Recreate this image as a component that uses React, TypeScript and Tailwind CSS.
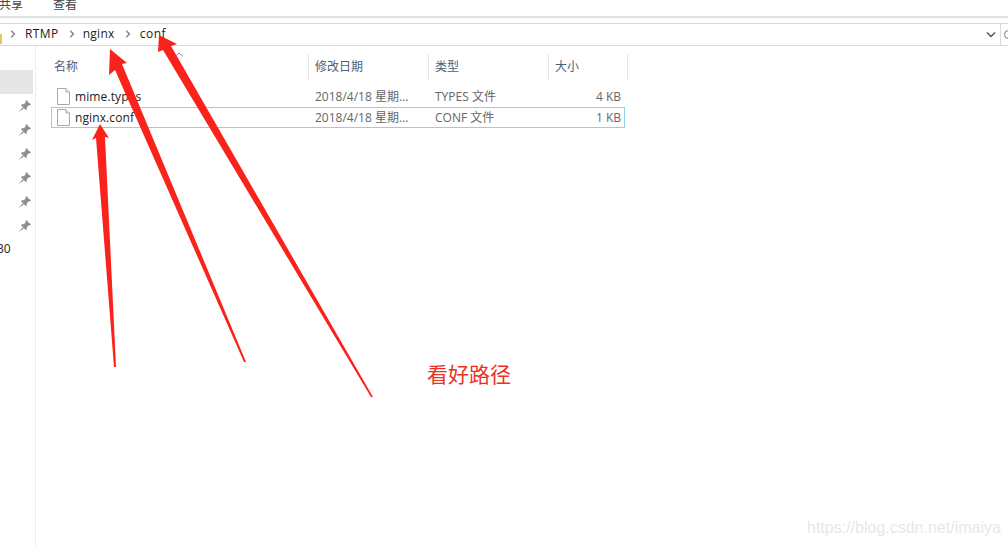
const Pin = () => (
  <svg width="12" height="12" viewBox="0 0 12 12" className="text-[#8f8f8f]">
    <path d="M7.2 0 L12 4.8 L10.8 5.6 L9.8 5.2 L7.8 7.2 L7.8 9.2 L6.8 10 L2 5.2 L2.8 4.2 L4.8 4.2 L6.8 2.2 L6.4 1.2 Z M3.6 7.2 L0 12 L4.8 8.4 Z" fill="currentColor" />
  </svg>
);

const FileIcon = () => (
  <svg width="13" height="17" viewBox="0 0 13 17" className="shrink-0">
    <path d="M0.5 0.5 H9 L12.5 4 V16.5 H0.5 Z" fill="#fff" stroke="#a8a8a8" />
    <path d="M9 0.5 V4 H12.5" fill="#f4f4f4" stroke="#a8a8a8" />
  </svg>
);

const Chevron = () => (
  <svg width="6" height="8" viewBox="0 0 6 8" className="shrink-0">
    <path d="M1.2 0.8 L4.4 4 L1.2 7.2" fill="none" stroke="#858585" strokeWidth="1.5" />
  </svg>
);

const files = [
  { name: "mime.types", date: "2018/4/18 星期...", type: "TYPES 文件", size: "4 KB" },
  { name: "nginx.conf", date: "2018/4/18 星期...", type: "CONF 文件", size: "1 KB" },
];

const font = "font-['Open_Sans','Noto_Sans_CJK_SC',sans-serif]";

const App = () => {
  return (
    <div className={`relative w-[1008px] h-[546px] overflow-hidden bg-white text-[12px] ${font}`}>
      {/* ribbon tabs */}
      <div className="h-[18px] border-b-2 border-[#e3e3e3] flex text-[#444] leading-[9px] overflow-hidden">
        <span className="w-[53px] ml-[-1px] shrink-0">共享</span>
        <span className="ml-[1px]">查看</span>
      </div>

      {/* address bar */}
      <div className="mt-[5px] h-[23px] border-y border-[#d9d9d9] flex items-center text-[#222]">
        <div className="w-[2px] h-[10px] bg-[#e8c55a] mt-[8px]" />
        <div className="flex items-center mb-[2px]">
          <div className="ml-[8px]"><Chevron /></div>
          <span className="ml-[9px] tracking-[0.4px]">RTMP</span>
          <div className="ml-[10px]"><Chevron /></div>
          <span className="ml-[8px] tracking-[0.3px]">nginx</span>
          <div className="ml-[10px]"><Chevron /></div>
          <span className="ml-[9px] tracking-[0.5px]">conf</span>
        </div>
        <div className="ml-auto flex items-center h-full">
          <svg width="12" height="8" viewBox="0 0 12 8" className="mr-[3px]">
            <path d="M2 1.5 L6 5.5 L10 1.5" fill="none" stroke="#555" strokeWidth="1.5" />
          </svg>
          <div className="w-[8px] h-full border-l border-[#d9d9d9] pl-[3px] flex items-center overflow-hidden">
            <div className="w-[9px] h-[9px] shrink-0 rounded-full border border-[#777]" />
          </div>
        </div>
      </div>

      <div className="flex h-[501px]">
        {/* nav pane */}
        <div className="w-[36px] shrink-0 border-r border-[#eeeeee] pt-[24px]">
          <div className="h-[24px] w-[33px] bg-[#e6e6e6]" />
          <div className="flex flex-col gap-[12px] pt-[6px] pl-[19px]">
            <Pin />
            <Pin />
            <Pin />
            <Pin />
            <Pin />
            <Pin />
          </div>
          <div className="mt-[9px] leading-[16px] text-[#222]">
            <span className="block ml-[-3px] whitespace-nowrap">30</span>
          </div>
        </div>

        {/* file list */}
        <div className="flex-1 pl-[14px] pt-[8px]">
          <div className="relative flex h-[26px] items-center text-[#4c607a]">
            <span className="w-[258px] pl-[4px]">名称</span>
            <span className="w-[120px] h-full pl-[6px] flex items-center border-l border-[#e5e5e5]">修改日期</span>
            <span className="w-[120px] h-full pl-[6px] flex items-center border-l border-[#e5e5e5]">类型</span>
            <span className="w-[80px] h-full pl-[6px] flex items-center border-x border-[#e5e5e5]">大小</span>
            <svg width="10" height="5" viewBox="0 0 10 5" className="absolute left-[124px] top-[-2px]">
              <path d="M1 4.5 L5 1 L9 4.5" fill="none" stroke="#8a8a8a" />
            </svg>
          </div>
          <div className="mt-[6px] ml-[1px] w-[574px] flex flex-col">
            {files.map((f, i) => (
              <div
                key={f.name}
                className={`flex h-[21px] items-center border ${i === 1 ? "border-[#8fd0ea]" : "border-transparent"}`}
              >
                <div className="w-[257px] pl-[5px] flex items-center gap-[5px] text-[#222]">
                  <FileIcon />
                  <span className="tracking-[0.1px]">{f.name}</span>
                </div>
                <span className="w-[120px] pl-[6px] text-[#666]">{f.date}</span>
                <span className="w-[110px] pl-[6px] text-[#666]">{f.type}</span>
                <span className="flex-1 pr-[3px] text-right text-[#666]">{f.size}</span>
              </div>
            ))}
          </div>
        </div>
      </div>

      {/* red annotation arrows */}
      <svg width="1008" height="546" viewBox="0 0 1008 546" className="absolute left-0 top-0 pointer-events-none">
        <path d="M100 124 L109 138 L105 137 L116 367 L114 367 L96 138 L92 140 Z" fill="#f9231c" />
        <path d="M110 49 L127 63 L122 64 L246 362 L244 362 L115 70 L109 75 Z" fill="#f9231c" />
        <path d="M159 35 L177 44 L171 46 L373 397 L371 397 L163 50 L158 52 Z" fill="#f9231c" />
      </svg>
      <div className="absolute left-[427px] top-[360px] text-[21px] leading-[28px] text-[#e8321f]">看好路径</div>
      <div className="absolute left-[807px] top-[518px] text-[16px] leading-[20px] text-[#e8e8e8] font-['Liberation_Sans',sans-serif]">
        https://blog.csdn.net/imaiya
      </div>
    </div>
  );
};

export default App;
